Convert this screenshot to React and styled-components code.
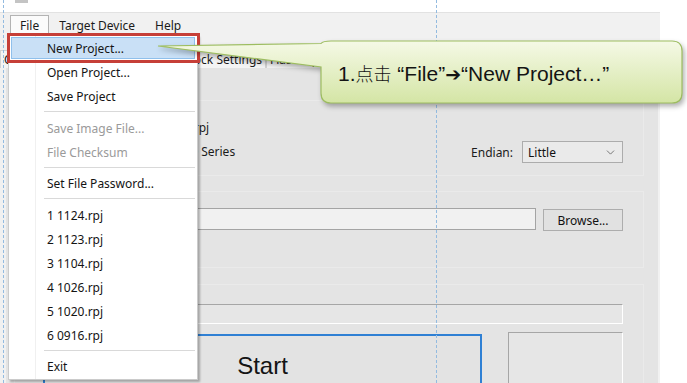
import React from "react";
import styled, { createGlobalStyle } from "styled-components";
import { ChevronDown } from "lucide-react";

const GlobalStyle = createGlobalStyle`
  html, body {
    margin: 0;
    padding: 0;
    background: #fff;
  }
  body {
    font-family: "Noto Sans", "Liberation Sans", sans-serif;
  }
`;

const Slide = styled.div`
  position: relative;
  width: 687px;
  height: 383px;
  overflow: hidden;
  background: #fff;
`;

const Window = styled.div`
  width: 660px;
  height: 100%;
  display: flex;
  flex-direction: column;
  background: #f1f1f1;
  font-family: "Noto Sans", sans-serif;
  font-size: 12px;
  color: #1b1b1b;
`;

const TitleBar = styled.div`
  height: 12px;
  flex: none;
  display: flex;
  align-items: flex-start;
  padding-left: 15px;
  background: #fff;
  border-bottom: 1px solid #e2e2e2;
`;

const AppIcon = styled.div`
  width: 13px;
  height: 3px;
  background: #c4c4c4;
`;

const MenuBar = styled.div`
  height: 22px;
  flex: none;
  display: flex;
  align-items: flex-end;
  padding-left: 10px;
`;

const MenuTitle = styled.div`
  height: 20px;
  box-sizing: border-box;
  padding: 0 9px;
  line-height: 19px;
  border: 1px solid ${(p) => (p.$open ? "#b3b3b3" : "transparent")};
  border-bottom: none;
  background: ${(p) => (p.$open ? "#fbfbfb" : "transparent")};
`;

const TabStrip = styled.div`
  height: 33px;
  flex: none;
  display: flex;
  align-items: flex-end;
`;

const Tab = styled.div`
  height: 18px;
  box-sizing: border-box;
  padding: 0 3px;
  line-height: 17px;
  border: 1px solid #d2d2d2;
  border-bottom: none;
  background: #f4f4f4;
  white-space: nowrap;
`;

const TabPage = styled.div`
  flex: 1;
  margin: 0 2px 0 6px;
  padding-top: 32px;
  background: #e4e4e4;
  display: flex;
  flex-direction: column;
  min-height: 0;
`;

const Group = styled.div`
  margin: ${(p) => p.$gap || 0}px 14px 0 8px;
  padding: ${(p) => p.$top}px 20px ${(p) => p.$bottom}px 28px;
  border: 1px solid #eaeaea;
  flex: none;
`;

const InfoRow = styled.div`
  display: flex;
  justify-content: space-between;
`;

const InfoList = styled.div`
  padding-left: 120px;
  line-height: 24px;
  display: flex;
  flex-direction: column;
`;

const FieldLine = styled.div`
  display: flex;
  align-items: center;
  gap: 9px;
  align-self: flex-end;
  margin-bottom: 1px;
`;

const Select = styled.div`
  width: 101px;
  height: 22px;
  box-sizing: border-box;
  padding: 0 5px;
  display: flex;
  align-items: center;
  justify-content: space-between;
  border: 1px solid #acacac;
  background: #eaeaea;
  color: #111;
`;

const FileRow = styled.div`
  display: flex;
  align-items: center;
  gap: 7px;
`;

const PathInput = styled.div`
  flex: 1;
  height: 22px;
  box-sizing: border-box;
  border: 1px solid #a4a4a4;
  background: #f1f1f1;
`;

const Button = styled.div`
  width: 80px;
  height: 22px;
  margin-top: 2px;
  box-sizing: border-box;
  border: 1px solid #adadad;
  background: #e1e1e1;
  display: flex;
  align-items: center;
  justify-content: center;
  color: #111;
`;

const Sunken = styled.div`
  box-sizing: border-box;
  height: ${(p) => p.$h}px;
  width: ${(p) => (p.$w ? `${p.$w}px` : "auto")};
  border-top: 1px solid #a6a6a6;
  border-left: 1px solid #a6a6a6;
  border-bottom: 1px solid #fff;
  border-right: 1px solid #fff;
  background: #e6e6e6;
  flex: none;
`;

const ActionRow = styled.div`
  display: flex;
  align-items: flex-start;
  gap: 26px;
  margin-top: 8px;
`;

const StartButton = styled.div`
  flex: 1;
  height: 80px;
  margin-top: 2px;
  box-sizing: border-box;
  padding-top: 18px;
  border: 2px solid #2f80d4;
  background: #e3e3e3;
  text-align: center;
  font-family: "Liberation Sans", Arial, sans-serif;
  font-size: 24px;
  line-height: 1;
  color: #141414;
`;

/* popup menu + annotations */

const Dropdown = styled.div`
  position: absolute;
  left: 8px;
  top: 35px;
  width: 190px;
  box-sizing: border-box;
  display: flex;
  flex-direction: column;
  padding-bottom: 1px;
  border: 1px solid #cbcbcb;
  background: linear-gradient(
    to right,
    #fff 26px,
    #f0f0f0 26px,
    #f0f0f0 27px,
    #fff 27px
  );
  box-shadow: 2px 2px 2px rgba(0, 0, 0, 0.28);
  font-family: "Noto Sans", sans-serif;
  font-size: 12px;
`;

const MenuItem = styled.div`
  height: 22px;
  margin: 1px 2px;
  box-sizing: border-box;
  padding: 1px 0 0 35px;
  line-height: 20px;
  border: 1px solid ${(p) => (p.$active ? "#8fc0ec" : "transparent")};
  background: ${(p) => (p.$active ? "#c9e0f6" : "transparent")};
  color: ${(p) => (p.$disabled ? "#9a9a9a" : "#141414")};
  white-space: nowrap;
`;

const Separator = styled.div`
  margin: 3px 2px 3.5px 35px;
  border-top: 1px solid #d9d9d9;
`;

const RedMark = styled.div`
  position: absolute;
  left: 7px;
  top: 33px;
  width: 193px;
  height: 30px;
  box-sizing: border-box;
  border: 3px solid #c63f38;
`;

const Guide = styled.div`
  position: absolute;
  top: 0;
  bottom: 0;
  left: ${(p) => p.$x}px;
  border-left: 1px dashed #93bbe0;
`;

const CalloutShape = styled.svg`
  position: absolute;
  left: 150px;
  top: 30px;
  overflow: visible;
  filter: drop-shadow(2px 3px 2.5px rgba(0, 0, 0, 0.3));
`;

const CalloutText = styled.div`
  position: absolute;
  left: 338px;
  top: 60px;
  line-height: 26px;
  font-family: "Liberation Sans", Arial, "Noto Sans CJK SC", sans-serif;
  font-size: 21px;
  color: #141414;
  white-space: nowrap;
`;

const Cjk = styled.span`
  font-family: "Noto Sans CJK SC", sans-serif;
  font-size: 18px;
  font-weight: 300;
`;

const Arrow = styled.span`
  font-family: "DejaVu Sans", sans-serif;
  font-size: 19px;
  font-weight: bold;
`;

const menu = [
  { label: "New Project...", active: true },
  { label: "Open Project..." },
  { label: "Save Project" },
  null,
  { label: "Save Image File...", disabled: true },
  { label: "File Checksum", disabled: true },
  null,
  { label: "Set File Password..." },
  null,
  { label: "1 1124.rpj" },
  { label: "2 1123.rpj" },
  { label: "3 1104.rpj" },
  { label: "4 1026.rpj" },
  { label: "5 1020.rpj" },
  { label: "6 0916.rpj" },
  null,
  { label: "Exit" },
];

const tabs = ["Operation", "Operation Settings", "Block Settings", "Flash Options"];

export default function App() {
  return (
    <>
      <GlobalStyle />
      <Slide>
        <Window>
          <TitleBar>
            <AppIcon />
          </TitleBar>
          <MenuBar>
            <MenuTitle $open>File</MenuTitle>
            <MenuTitle>Target Device</MenuTitle>
            <MenuTitle>Help</MenuTitle>
          </MenuBar>
          <TabStrip>
            {tabs.map((t) => (
              <Tab key={t}>{t}</Tab>
            ))}
          </TabStrip>
          <TabPage>
            <Group $top={15} $bottom={11}>
              <InfoRow>
                <InfoList>
                  <span>1124.rpj</span>
                  <span>RX600 Series</span>
                </InfoList>
                <FieldLine>
                  <span>Endian:</span>
                  <Select>
                    <span>Little</span>
                    <ChevronDown size={13} strokeWidth={1.4} color="#555" />
                  </Select>
                </FieldLine>
              </InfoRow>
            </Group>
            <Group $gap={15} $top={15} $bottom={36}>
              <FileRow>
                <PathInput />
                <Button>Browse...</Button>
              </FileRow>
            </Group>
            <Group $gap={16} $top={19} $bottom={0}>
              <Sunken $h={20} />
              <ActionRow>
                <StartButton>Start</StartButton>
                <Sunken $h={80} $w={115} />
              </ActionRow>
            </Group>
          </TabPage>
        </Window>

        <Dropdown>
          {menu.map((m, i) =>
            m ? (
              <MenuItem key={i} $active={m.active} $disabled={m.disabled}>
                {m.label}
              </MenuItem>
            ) : (
              <Separator key={i} />
            )
          )}
        </Dropdown>
        <RedMark />

        <Guide $x={3} />
        <Guide $x={436} />

        <CalloutShape width="540" height="90" viewBox="0 0 540 90">
          <defs>
            <linearGradient id="calloutFill" x1="0" y1="0" x2="0" y2="1">
              <stop offset="0" stopColor="#f5f9e6" />
              <stop offset="1" stopColor="#d4e5a5" />
            </linearGradient>
          </defs>
          <path
            d="M181 11 H522 Q532 11 532 21 V63 Q532 73 522 73 H181 Q171 73 171 63 V37 L8 16 L171 13.5 Q173 11 181 11 Z"
            fill="url(#calloutFill)"
            stroke="#9dbd60"
            strokeWidth="1.2"
          />
        </CalloutShape>
        <CalloutText>
          1.<Cjk>点击</Cjk> “File”<Arrow>➔</Arrow>“New Project…”
        </CalloutText>
      </Slide>
    </>
  );
}
